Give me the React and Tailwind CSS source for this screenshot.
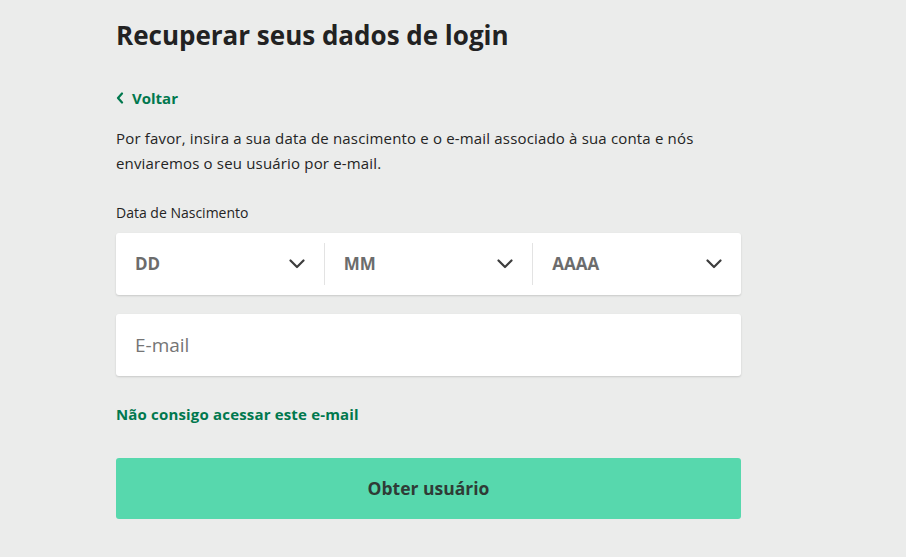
import { useState } from 'react';

function Chevron() {
  return (
    <svg width="16" height="10" viewBox="0 0 16 10" fill="none" className="shrink-0">
      <path d="M1.5 1.5 L8 8 L14.5 1.5" stroke="#3d3d3d" strokeWidth="2.2" strokeLinecap="round" strokeLinejoin="round" />
    </svg>
  );
}

function DateSelect({ label, last }) {
  return (
    <div className={`flex-1 flex items-center justify-between pl-[19px] pr-[19px] h-full ${last ? '' : 'border-r border-[#e3e3e3]'}`}>
      <span className="text-[17px] font-bold text-[#6c6c6c]">{label}</span>
      <Chevron />
    </div>
  );
}

export default function App() {
  const [email, setEmail] = useState('');

  return (
    <div className="min-h-screen bg-[#ebeceb] font-['Open_Sans',sans-serif] text-[#242424]">
      <div className="ml-[116px] w-[625px] pt-[16px]">
        <h1 className="text-[26px] font-bold leading-[38px] text-[#222]">Recuperar seus dados de login</h1>

        <a href="#" className="mt-[33px] flex items-center gap-[8px] text-[15px] font-bold text-[#00784e]">
          <svg width="8" height="12" viewBox="0 0 8 12" fill="none">
            <path d="M6 1.5 L2 6 L6 10.5" stroke="#00784e" strokeWidth="2.2" strokeLinecap="round" strokeLinejoin="round" />
          </svg>
          Voltar
        </a>

        <p className="mt-[16px] text-[15px] leading-[25px] tracking-[0.17px] text-[#242424]">
          Por favor, insira a sua data de nascimento e o e-mail associado à sua conta e nós enviaremos o seu usuário por e-mail.
        </p>

        <div className="mt-[27px] text-[14px] leading-[20px] text-[#242424]">Data de Nascimento</div>

        <div className="mt-[10px] h-[62px] bg-white rounded-[3px] shadow-[0_1px_2px_rgba(0,0,0,0.15)] flex items-center py-[10px]">
          <DateSelect label="DD" />
          <DateSelect label="MM" />
          <DateSelect label="AAAA" last />
        </div>

        <div className="mt-[19px] h-[62px] bg-white rounded-[3px] shadow-[0_1px_2px_rgba(0,0,0,0.15)] flex items-center">
          <input
            value={email}
            onChange={e => setEmail(e.target.value)}
            placeholder="E-mail"
            className="w-full h-full px-[19px] bg-transparent outline-none text-[19px] text-[#333] placeholder:text-[#757575]"
          />
        </div>

        <a href="#" className="block mt-[26px] text-[15px] font-bold leading-[24px] tracking-[0.17px] text-[#00784e]">Não consigo acessar este e-mail</a>

        <button className="mt-[32px] w-full h-[61px] rounded-[3px] bg-[#57d8ad] text-[17.5px] font-bold text-[#2f3b36]">
          Obter usuário
        </button>
      </div>
    </div>
  );
}
